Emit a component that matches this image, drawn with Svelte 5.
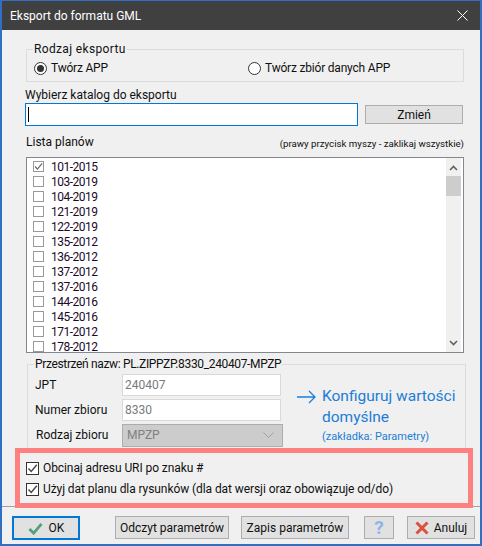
<script lang="ts">
const plans = ['101-2015','103-2019','104-2019','121-2019','122-2019','135-2012','136-2012','137-2012','137-2016','144-2016','145-2016','171-2012','178-2012'];
</script>

{#snippet tick(color: string)}
  <svg class="tick" viewBox="0 0 13 13"><path d="M2.5 6.5 L5.2 9.5 L10.8 2.8" fill="none" stroke={color} stroke-width="1.4"/></svg>
{/snippet}

<div class="window">
  <header class="titlebar">
    <span>Eksport do formatu GML</span>
    <svg class="close" viewBox="0 0 11 11"><path d="M.5 .5 L10.5 10.5 M10.5 .5 L.5 10.5" stroke="#fff" stroke-width="1" fill="none"/></svg>
  </header>

  <main class="content">
    <fieldset class="kind">
      <legend>Rodzaj eksportu</legend>
      <label class="radio first"><span class="dot on"></span>Twórz APP</label>
      <label class="radio"><span class="dot"></span>Twórz zbiór danych APP</label>
    </fieldset>

    <div class="dirlabel">Wybierz katalog do eksportu</div>
    <div class="dirrow">
      <div class="dirinput"><i class="caret"></i></div>
      <button class="zmien">Zmień</button>
    </div>

    <div class="listhead">
      <span>Lista planów</span>
      <small>(prawy przycisk myszy - zaklikaj wszystkie)</small>
    </div>
    <div class="list">
      <ul>
        {#each plans as plan, i}
          <li>
            <span class="box">{#if i === 0}{@render tick('#666')}{/if}</span>
            <span class="plan">{plan}</span>
          </li>
        {/each}
      </ul>
      <div class="scroll">
        <svg viewBox="0 0 9 6"><path d="M1 5 L4.5 1.5 L8 5" fill="none" stroke="#606060" stroke-width="1.6"/></svg>
        <div class="thumb"></div>
        <svg class="down" viewBox="0 0 9 6"><path d="M1 1 L4.5 4.5 L8 1" fill="none" stroke="#606060" stroke-width="1.6"/></svg>
      </div>
    </div>

    <fieldset class="ns">
      <legend>Przestrzeń nazw: PL.ZIPPZP.8330_240407-MPZP</legend>
      <div class="nsgrid">
        <div class="fields">
          <span>JPT</span><div class="field">240407</div>
          <span>Numer zbioru</span><div class="field">8330</div>
          <span class="indent">Rodzaj zbioru</span>
          <div class="select">MPZP
            <svg viewBox="0 0 11 6"><path d="M.5 .5 L5.5 5.5 L10.5 .5" fill="none" stroke="#a0a0a0" stroke-width="1"/></svg>
          </div>
        </div>
        <div class="config">
          <div class="configline">
            <svg class="arrow" viewBox="0 0 19 14"><path d="M0 7 H18 M12 1 L18 7 L12 13" fill="none" stroke="#1c7ed6" stroke-width="1.3"/></svg>
            <span>Konfiguruj wartości</span>
          </div>
          <div class="configsub">domyślne</div>
          <div class="confignote">(zakładka: Parametry)</div>
        </div>
      </div>
    </fieldset>

    <section class="highlight">
      <label class="check"><span class="box dark">{@render tick('#444')}</span>Obcinaj adresu URI po znaku #</label>
      <label class="check"><span class="box dark">{@render tick('#444')}</span>Użyj dat planu dla rysunków (dla dat wersji oraz obowiązuje od/do)</label>
    </section>
  </main>

  <footer class="footer">
    <button class="ok">
      <svg viewBox="0 0 16 14"><path d="M1.5 7.5 L6 12 L14.5 2" fill="none" stroke="#4fa27c" stroke-width="3"/></svg>
      OK
    </button>
    <button class="odczyt">Odczyt parametrów</button>
    <button class="zapis">Zapis parametrów</button>
    <button class="help">?</button>
    <button class="cancel">
      <svg viewBox="0 0 14 14"><path d="M1.5 1.5 L12.5 12.5 M12.5 1.5 L1.5 12.5" fill="none" stroke="#d9533b" stroke-width="3"/></svg>
      Anuluj
    </button>
  </footer>
</div>

<style>
:global(body) {
  margin: 0;
  background: #f0f0f0;
}
.window {
  box-sizing: border-box;
  width: 482px;
  height: 546px;
  display: flex;
  flex-direction: column;
  border: 2px solid #2f6fc6;
  border-top-width: 1px;
  background: #f0f0f0;
  font-family: Roboto, "Noto Sans", sans-serif;
  font-size: 12px;
  color: #111;
}
.titlebar {
  flex: none;
  height: 29px;
  background: #404040;
  color: #fff;
  display: flex;
  align-items: center;
  justify-content: space-between;
  padding: 0 12px 0 8px;
  font-size: 12px;
}
.close {
  width: 11px;
  height: 11px;
}
.content {
  flex: 1;
  padding: 0 0 0 23px;
  display: flex;
  flex-direction: column;
  min-height: 0;
}
fieldset {
  margin: 0;
  padding: 0;
  border: 1px solid #dcdcdc;
  min-width: 0;
}
legend {
  padding: 0 1px;
  line-height: 16px;
}
.kind {
  box-sizing: border-box;
  width: 438px;
  height: 41px;
  margin: 11px 0 0 1px;
  display: flex;
  padding-left: 7px;
  padding-top: 3px;
}
.kind legend {
  margin-left: -1px;
  letter-spacing: 0.35px;
}
.radio {
  display: flex;
  align-items: center;
  gap: 4px;
  height: 16px;
  letter-spacing: -0.2px;
}
.radio.first {
  width: 214px;
}
.dot {
  box-sizing: border-box;
  width: 13px;
  height: 13px;
  border-radius: 50%;
  border: 1px solid #333;
  background: #fff;
  display: grid;
  place-items: center;
}
.dot.on::after {
  content: "";
  width: 7px;
  height: 7px;
  border-radius: 50%;
  background: #333;
}
.dirlabel {
  margin-top: 5px;
  line-height: 16px;
}
.dirrow {
  display: flex;
  align-items: center;
  gap: 7px;
}
.dirinput {
  box-sizing: border-box;
  width: 333px;
  height: 23px;
  border: 1px solid #0078d7;
  background: #fff;
  display: flex;
  align-items: center;
  padding-left: 2px;
}
.caret {
  width: 1px;
  height: 15px;
  background: #000;
}
button {
  box-sizing: border-box;
  font: inherit;
  color: #111;
  background: #e1e1e1;
  border: 1px solid #adadad;
  padding: 0;
  display: flex;
  align-items: center;
  justify-content: center;
}
.zmien {
  width: 98px;
  height: 19px;
}
.listhead {
  width: 438px;
  margin: 7px 0 0 1px;
  display: flex;
  justify-content: space-between;
  align-items: flex-end;
  height: 18px;
  line-height: 18px;
}
.listhead small {
  font-size: 9.7px;
  margin-bottom: -2px;
}
.list {
  box-sizing: border-box;
  width: 438px;
  height: 196px;
  margin: 6px 0 0 1px;
  border: 1px solid #828790;
  background: #fff;
  display: flex;
  overflow: hidden;
}
ul {
  flex: 1;
  list-style: none;
  margin: 0;
  padding: 1px 0 0 6px;
}
li {
  height: 15px;
  display: flex;
  align-items: center;
  gap: 7px;
  color: #1a0a2a;
}
.plan {
  letter-spacing: -0.5px;
}
.box {
  box-sizing: border-box;
  flex: none;
  width: 11px;
  height: 11px;
  border: 1px solid #999;
  background: #fff;
  display: block;
  position: relative;
}
.box.dark {
  width: 13px;
  height: 13px;
  border-color: #333;
}
.tick {
  position: absolute;
  inset: -1px;
  width: calc(100% + 2px);
  height: calc(100% + 2px);
}
.scroll {
  flex: none;
  width: 15px;
  margin-right: 2px;
  background: #f0f0f0;
  display: flex;
  flex-direction: column;
  align-items: center;
}
.scroll svg {
  width: 9px;
  height: 6px;
  margin-top: 7px;
  margin-bottom: 5px;
}
.scroll svg.down {
  margin-top: auto;
  margin-bottom: 6px;
}
.thumb {
  width: 15px;
  height: 20px;
  background: #cdcdcd;
}
.ns {
  box-sizing: border-box;
  width: 439px;
  height: 94px;
  margin: 3px 0 0 2px;
  border-bottom: 0;
  padding: 0 0 0 8px;
}
.ns legend {
  margin-left: -2px;
  letter-spacing: -0.35px;
}
.nsgrid {
  display: flex;
  margin: 2px 0 0 -1px;
}
.fields {
  display: grid;
  grid-template-columns: 87px 159px;
  grid-auto-rows: 22px;
  row-gap: 3px;
  align-items: center;
}
.indent {
  padding-left: 1px;
}
.field {
  box-sizing: border-box;
  height: 22px;
  border: 1px solid #d9d9d9;
  background: #fff;
  color: #7a7a7a;
  padding-left: 2px;
  line-height: 20px;
}
.select {
  box-sizing: border-box;
  width: 161px;
  height: 23px;
  border: 1px solid #adadad;
  background: #cccccc;
  color: #808080;
  display: flex;
  align-items: center;
  justify-content: space-between;
  padding: 0 8px 0 4px;
  font-size: 12px;
}
.select svg {
  width: 11px;
  height: 6px;
}
.config {
  margin: 12px 0 0 16px;
  color: #1c7ed6;
  font-size: 15.5px;
  line-height: 21px;
}
.configline {
  display: flex;
  align-items: center;
  gap: 6px;
}
.arrow {
  width: 19px;
  height: 14px;
}
.configsub {
  padding-left: 25px;
}
.confignote {
  padding-left: 25px;
  font-size: 11px;
  line-height: 17px;
}
.highlight {
  box-sizing: border-box;
  width: 458px;
  height: 60px;
  margin: -2px 0 -2px -10px;
  border: 5px solid #ff8080;
  background: #f0f0f0;
  padding: 7px 0 0 6px;
  display: flex;
  flex-direction: column;
  gap: 5px;
  position: relative;
}
.check {
  display: flex;
  align-items: center;
  gap: 4px;
  height: 16px;
  letter-spacing: -0.08px;
}
.footer {
  flex: none;
  height: 38px;
  border-top: 1px solid #a0a0a0;
  display: flex;
  align-items: flex-start;
  padding: 9px 0 0 10px;
  box-sizing: border-box;
}
.footer button {
  height: 23px;
}
.ok {
  width: 68px;
  border: 2px solid #0078d7;
  gap: 6px;
  height: 24px !important;
}
.ok svg {
  width: 15px;
  height: 13px;
}
.odczyt {
  width: 114px;
  margin-left: 35px;
}
.zapis {
  width: 108px;
  margin-left: 12px;
}
.help {
  width: 30px;
  margin-left: 15px;
  color: #8db4e6;
  font-size: 19px;
  font-weight: 700;
}
.cancel {
  width: 68px;
  margin-left: 13px;
  gap: 5px;
}
.cancel svg {
  width: 14px;
  height: 14px;
}
</style>
